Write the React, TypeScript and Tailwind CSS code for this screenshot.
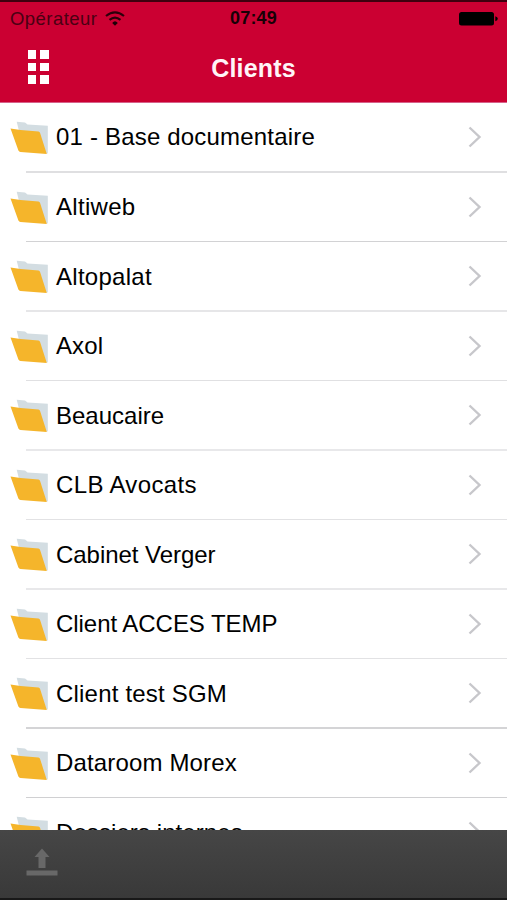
const clients = [
  { name: '01 - Base documentaire', line: 'bg-[#dfdfe1] h-[2px]', spacing: 'tracking-[0.19px]' },
  { name: 'Altiweb', line: 'bg-[#d2d2d4] h-[1.5px]', spacing: 'tracking-[0.3px]' },
  { name: 'Altopalat', line: 'bg-[#e6e6e8] h-[1.5px]', spacing: 'tracking-[0.27px]' },
  { name: 'Axol', line: 'bg-[#e0e0e2] h-[1.5px]', spacing: 'tracking-[0.1px]' },
  { name: 'Beaucaire', line: 'bg-[#e8e8ea] h-[1.5px]', spacing: 'tracking-[0px]' },
  { name: 'CLB Avocats', line: 'bg-[#e2e2e4] h-[1.5px]', spacing: 'tracking-[0.35px]' },
  { name: 'Cabinet Verger', line: 'bg-[#e8e8ea] h-[1.5px]', spacing: 'tracking-[-0.04px]' },
  { name: 'Client ACCES TEMP', line: 'bg-[#e2e2e4] h-[1.5px]', spacing: 'tracking-[-0.05px]' },
  { name: 'Client test SGM', line: 'bg-[#d4d4d6] h-[1.5px]', spacing: 'tracking-[0.2px]' },
  { name: 'Dataroom Morex', line: 'bg-[#d0d0d2] h-[1.5px]', spacing: 'tracking-[0.15px]' },
  { name: 'Dossiers internes', line: 'bg-[#e0e0e2] h-[1.5px]', spacing: 'tracking-[0.08px]' },
];

function Folder() {
  return (
    <svg className="mt-[2px] ml-[10px] h-[34px] w-[39px] shrink-0" viewBox="0 0 39 34">
      <path d="M6.7 .7L15 1.4L17.5 3.4L37.8 4.8V32.5L14 30Z" fill="#d3dde2" />
      <path d="M.5 7.5L10.5 9L28.5 10.5Q29.6 10.7 30 11.7L36.8 33L10.5 31Q9 30.8 8.4 29.6Z" fill="#f5b52b" />
    </svg>
  );
}

function Wifi() {
  return (
    <svg className="ml-[8px] h-[15px] w-[20px]" viewBox="0 0 20 15">
      <path d="M1 5Q10-2.4 19 5M4.5 8.9Q10 4.4 15.5 8.9" fill="none" stroke="#2b000b" strokeWidth="2.2" />
      <path d="M7.2 11.9Q10 8.6 12.8 11.9L10 14.8Z" fill="#1c0007" />
    </svg>
  );
}

export default function App() {
  return (
    <div className="flex h-[900px] w-[507px] flex-col overflow-hidden bg-white font-['Liberation_Sans',Arial,sans-serif] text-black">
      <header className="h-[103px] shrink-0 border-t-2 border-b border-t-[#3f000f] border-b-[#d6628a] bg-[#cb0032]">
        <div className="grid h-[33px] grid-cols-3 items-center">
          <div className="flex items-center pl-[10px] text-[18.5px] text-[#4a0012]">
            <span className="tracking-[0.45px]">Opérateur</span>
            <Wifi />
          </div>
          <div className="text-center text-[18px] font-bold tracking-[0.2px] text-[#180006]">07:49</div>
          <svg className="mr-[9px] h-[14px] w-[39px] justify-self-end" viewBox="0 0 39 14">
            <rect x="0" y="0" width="35" height="13.5" rx="2.5" />
            <path d="M36.3 4.3Q38.8 5 38.8 6.8Q38.8 8.6 36.3 9.3Z" />
          </svg>
        </div>
        <div className="grid h-[64px] grid-cols-3 items-center">
          <div className="ml-[27.5px] grid w-[21.5px] grid-cols-2 gap-[4px]">
            {[0, 1, 2, 3, 4, 5].map((i) => (
              <span key={i} className="h-[8.6px] bg-white" />
            ))}
          </div>
          <h1 className="pt-[3px] text-center text-[25px] font-bold tracking-[0.2px] text-[#fff4f7]">Clients</h1>
        </div>
      </header>
      <main className="min-h-0 flex-1 overflow-hidden">
        {clients.map((c) => (
          <div key={c.name} className="flex h-[69.5px] flex-col">
            <div className="flex min-h-0 flex-1 items-center">
              <Folder />
              <span className={`ml-[7px] flex-1 pt-px text-[24px] whitespace-nowrap ${c.spacing}`}>{c.name}</span>
              <svg className="mr-[25px] h-[22px] w-[14px]" viewBox="0 0 14 22">
                <path d="M1.5 1.5L11.5 11L1.5 20.5" fill="none" stroke="#c7c7cb" strokeWidth="2.4" />
              </svg>
            </div>
            <div className={`ml-[26px] ${c.line}`} />
          </div>
        ))}
      </main>
      <footer className="h-[70px] shrink-0 border-b-2 border-[#181818] bg-linear-to-b from-[#464646] to-[#393939]">
        <svg className="mt-[18px] ml-[26px] h-[28px] w-[32px]" viewBox="0 0 32 28" fill="#686868">
          <path d="M16 .5L23.5 9H19.5V20H12.5V9H8.5Z" />
          <rect x="0.5" y="22.5" width="31" height="5" />
        </svg>
      </footer>
    </div>
  );
}
